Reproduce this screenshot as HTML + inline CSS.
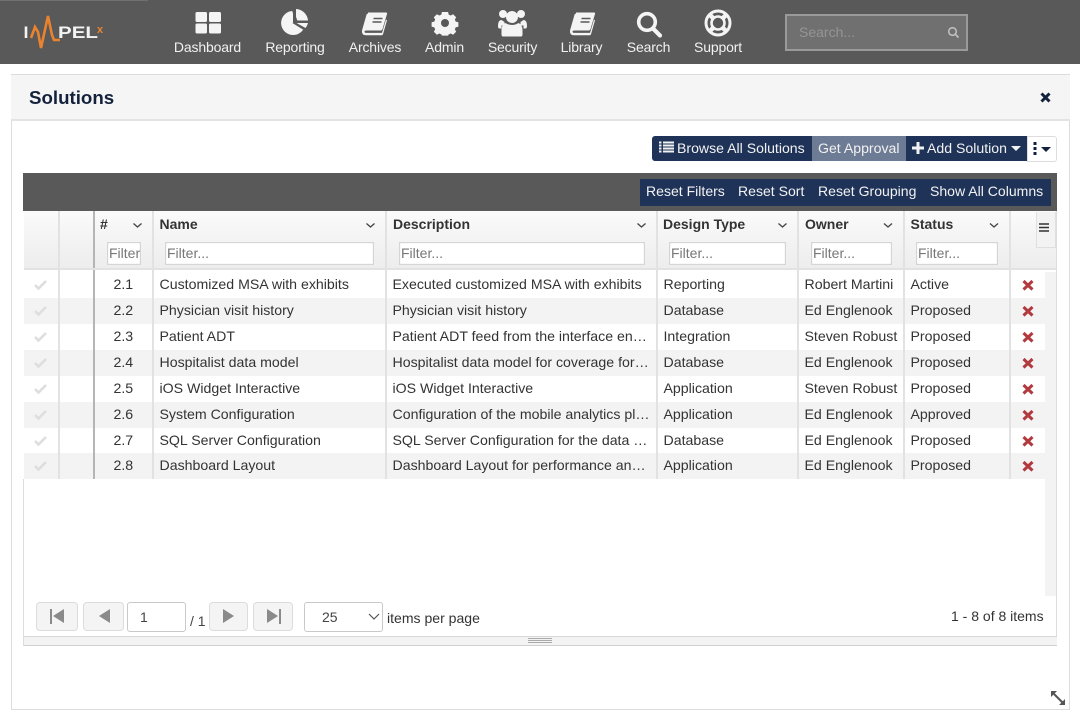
<!DOCTYPE html>
<html lang="en"><head><meta charset="utf-8"><title>Solutions</title>
<style>
*{box-sizing:border-box}
html,body{margin:0;padding:0;width:1080px;height:720px;overflow:hidden;background:#fff;font-family:"Liberation Sans",Arial,sans-serif;font-size:14px;color:#333}
.a{position:absolute;white-space:nowrap}
.nav{position:absolute;left:0;top:0;width:1080px;height:64px;background:#595959}
.nl{position:absolute;top:39px;height:16px;line-height:16px;color:#f1f1f1;font-size:14px;letter-spacing:-.15px;transform:translateX(-50%);white-space:nowrap}
.search{position:absolute;left:785px;top:14px;width:183px;height:37px;background:#707070;border:2px solid #9a9a9a;color:#959595;line-height:33px;padding-left:12px;font-size:14px}
.panel{position:absolute;left:11px;top:74px;width:1059px;height:636px;border:1px solid #ddd;background:#fff}
.phead{position:absolute;left:11px;top:75px;width:1059px;height:46px;background:#f5f5f5;border-bottom:2px solid #e3e3e3}
.title{position:absolute;left:29px;top:86px;font-size:18.700px;line-height:23px;font-weight:bold;color:#14213d}
.btn{position:absolute;top:136px;height:25px;line-height:24px;background:#1f3358;color:#f2f2f2;font-size:14.100px;white-space:nowrap}
.toolbar{position:absolute;left:23px;top:173px;width:1034px;height:38px;background:#595959}
.rb{position:absolute;left:640px;top:179px;width:411px;height:27px;background:#1f3358}
.rb span{position:absolute;top:0;line-height:25px;color:#f2f2f2;font-size:14.050px;white-space:nowrap}
.thead{position:absolute;left:24px;top:211px;width:1032px;height:59px;background:linear-gradient(#fbfbfb,#f6f6f6 30%,#ededed);border-bottom:2px solid #e2e2e2}
.sep{position:absolute;width:2px;background:#e2e2e2}
.dark{background:#b5b5b5}
.th{position:absolute;top:216px;font-weight:bold;color:#333;line-height:16px;white-space:nowrap}
.f{position:absolute;top:242px;height:23px;background:#fff;border:1px solid #d5d5d5;color:#777;line-height:20px;padding-left:1px;overflow:hidden;white-space:nowrap;box-shadow:inset 0 0 1px #ccc}
.row{position:absolute;left:24px;width:1021px;height:26px}
.g{background:#f3f3f3}
.c{position:absolute;top:-1px;line-height:26px;white-space:nowrap;color:#333;font-size:14.150px;margin-left:.5px}
.ck{position:absolute;left:9px;top:6px}
.x{position:absolute;left:998px;top:7px}
.pg{position:absolute;top:602px;height:29px;background:#f4f4f4;border:1px solid #dcdcdc;border-radius:4px}
.box{position:absolute;top:602px;height:30px;background:#fff;border:1px solid #c9c9c9;border-radius:3px;line-height:28px;color:#444}
</style></head><body>
<div class="nav"></div>
<div class="a" style="left:0;top:0;width:148px;height:1px;background:#707070"></div>

<svg class="a" style="left:0;top:0" width="1080" height="64" viewBox="0 0 1080 64">
<text x="23.500" y="38" font-family="Liberation Sans" font-size="17" font-weight="bold" fill="#f3f3f3" textLength="5" lengthAdjust="spacingAndGlyphs">I</text>
<path d="M31 38l4-11 3 5 3 16 7-32 4 19 2 5 6 0" fill="none" stroke="#e9832f" stroke-width="2.600"/>
<text x="58" y="38" font-family="Liberation Sans" font-size="17" font-weight="bold" fill="#f3f3f3" textLength="40" lengthAdjust="spacingAndGlyphs">PEL</text>
<text x="97" y="33" font-family="Liberation Sans" font-size="11" font-weight="bold" fill="#e9832f">x</text>
<g fill="#f4f4f4">
<rect x="195.500" y="12" width="11.500" height="10" rx="1.500"/><rect x="209" y="12" width="12" height="10" rx="1.500"/><rect x="195.500" y="23.500" width="11.500" height="10" rx="1.500"/><rect x="209" y="23.500" width="12" height="10" rx="1.500"/>
<path d="M293 11A12 12 0 1 0 303.500 29L293 22.500Z"/><path d="M296 9A12.500 12.500 0 0 1 308 20.500L296 20.500Z"/><path d="M296.500 23L308 23A13 13 0 0 1 305.500 28Z"/>
<path id="bk" d="M368 12.500h18q1.500 0 1 1.500l-4.500 15q-.5 1.500-2 1.500h-14q-2 0-2 1.200t2 1.200h15.500l4-13.400 1 .8-4 14q-.3 1-1.500 1H366q-4.500 0-4-4.500q.2-1 .5-2l4-14q.3-1.300 1.500-1.300Z"/>
<path d="M441.500 12h7l.7 3 2.300 1 2.700-1.500 3.500 3.500-1.500 2.700 1 2.300 3 .7v5l-3 .7-1 2.300 1.500 2.700-3.500 3.500-2.700-1.500-2.300 1-.7 1.500h-7l-.7-1.500-2.300-1-2.700 1.500-3.500-3.500 1.500-2.700-1-2.300-3-.7v-5l3-.7 1-2.300-1.500-2.700 3.500-3.500 2.700 1.500 2.300-1z" transform="translate(445 23) scale(.88) translate(-445 -24.500)" fill-rule="evenodd"/>
<circle cx="503" cy="14" r="4"/><circle cx="521" cy="14" r="4"/><circle cx="512" cy="17" r="6"/>
<path d="M498 26q0-6 3.500-6l3 2v3.500h-3v3h-2q-1.500 0-1.500-2.500ZM527 26q0-6-3.500-6l-3 2v3.500h3v3h2q1.500 0 1.500-2.500Z"/>
<path d="M503 36.500q-1.500 0-1.500-2v-4q0-6 4-7.500 3 2 6.500 2t6.500-2q4 1.500 4 7.500v4q0 2-1.500 2Z"/>
<path d="M576 12.500h18q1.500 0 1 1.500l-4.500 15q-.5 1.500-2 1.500h-14q-2 0-2 1.200t2 1.200h15.500l4-13.400 1 .8-4 14q-.3 1-1.500 1H574q-4.500 0-4-4.500q.2-1 .5-2l4-14q.3-1.300 1.500-1.300Z"/>
</g>
<g stroke="#595959" stroke-width="1.600" fill="none">
<path d="M296.500 20.500 293 11M293 22.500l10.500 6.500"/>
<path d="M373.500 18.500h9M372.500 22h9"/><path d="M581.500 18.500h9M580.500 22h9"/>
</g>
<circle cx="445" cy="23" r="4" fill="#595959"/>
<circle cx="647" cy="22" r="8.300" fill="none" stroke="#f4f4f4" stroke-width="3.600"/>
<path d="M653 28.500l7 7" stroke="#f4f4f4" stroke-width="4.200" stroke-linecap="round"/>
<circle cx="718" cy="23" r="12" fill="none" stroke="#f4f4f4" stroke-width="3"/>
<circle cx="718" cy="23" r="6.500" fill="none" stroke="#f4f4f4" stroke-width="2.600"/>
<path d="M710 15l4 4M726 15l-4 4M710 31l4-4M726 31l-4-4" stroke="#f4f4f4" stroke-width="4.500"/>
</svg>
<div class="nl" style="left:207.500px">Dashboard</div>
<div class="nl" style="left:295px">Reporting</div>
<div class="nl" style="left:375px">Archives</div>
<div class="nl" style="left:444.500px">Admin</div>
<div class="nl" style="left:512.500px">Security</div>
<div class="nl" style="left:581.500px">Library</div>
<div class="nl" style="left:648.500px">Search</div>
<div class="nl" style="left:718px">Support</div>
<div class="search">Search...</div>
<svg class="a" style="left:947px;top:26px" width="13" height="13" viewBox="0 0 13 13"><circle cx="5.500" cy="5.500" r="3.800" fill="none" stroke="#bdbdbd" stroke-width="1.600"/><path d="M8.500 8.500l3 3" stroke="#bdbdbd" stroke-width="1.800"/></svg>

<div class="panel"></div>
<div class="phead"></div>
<div class="title" style="top:86px">Solutions</div>
<svg class="a" style="left:1040px;top:92px" width="11" height="11" viewBox="0 0 11 11"><path d="M1.500 1.500l8 8M9.500 1.500l-8 8" stroke="#14213d" stroke-width="3"/></svg>

<div class="btn" style="left:652px;width:160px;border-radius:3px 0 0 3px"></div>
<svg class="a" style="left:659px;top:141px" width="15" height="12" viewBox="0 0 15 12"><path d="M0 1.500h2.500M4 1.500h11M0 4.500h2.500M4 4.500h11M0 7.500h2.500M4 7.500h11M0 10.500h2.500M4 10.500h11" stroke="#f2f2f2" stroke-width="2"/></svg>
<div class="btn" style="left:677px;background:none">Browse All Solutions</div>
<div class="btn" style="left:812px;width:94px;background:#6d7b94;padding-left:6px">Get Approval</div>
<div class="btn" style="left:906px;width:121px;padding-left:21px">Add Solution</div>
<svg class="a" style="left:912px;top:142px" width="12" height="12" viewBox="0 0 12 12"><path d="M6 0v12M0 6h12" stroke="#f2f2f2" stroke-width="3"/></svg>
<svg class="a" style="left:1011px;top:146px" width="10" height="6" viewBox="0 0 10 6"><path d="M0 0h10L5 5z" fill="#f2f2f2"/></svg>
<div class="a" style="left:1027px;top:136px;width:30px;height:26px;background:#fff;border:1px solid #ddd;border-radius:0 3px 3px 0"></div>
<svg class="a" style="left:1033px;top:142px" width="20" height="13" viewBox="0 0 20 13"><path d="M2 0v3M2 5v3M2 10v3" stroke="#14213d" stroke-width="3"/><path d="M8 5h10l-5 5z" fill="#14213d"/></svg>

<div class="toolbar"></div>
<div class="rb"><span style="left:6px">Reset Filters</span><span style="left:98px">Reset Sort</span><span style="left:178px">Reset Grouping</span><span style="left:290px">Show All Columns</span></div>

<div class="thead"></div>
<div class="a" style="left:1036px;top:212px;width:20px;height:36px;background:#f3f3f3;border:1px solid #dfdfdf;border-top:0"></div>
<svg class="a" style="left:1039px;top:223px" width="11" height="9" viewBox="0 0 11 9"><path d="M0 1h10M0 4.500h10M0 8h10" stroke="#333" stroke-width="1.500"/></svg>

<div class="a" style="left:1045px;top:272px;width:11px;height:324px;background:#f3f3f3"></div>

<div class="row" style="top:272px"><svg class="ck" width="15" height="13" viewBox="0 0 15 13"><path d="M2 7l3.500 3.500L13 3" fill="none" stroke="#dedede" stroke-width="2.600"/></svg><span class="c" style="left:89px">2.1</span><span class="c" style="left:135px">Customized MSA with exhibits</span><span class="c" style="left:368px">Executed customized MSA with exhibits</span><span class="c" style="left:639px">Reporting</span><span class="c" style="left:780px">Robert Martini</span><span class="c" style="left:886px">Active</span><svg class="x" width="12" height="12" viewBox="0 0 12 12"><path d="M1.500 2l9 8.500M10.500 2l-9 8.500" stroke="#b23a3e" stroke-width="3"/></svg></div>
<div class="row g" style="top:298px"><svg class="ck" width="15" height="13" viewBox="0 0 15 13"><path d="M2 7l3.500 3.500L13 3" fill="none" stroke="#dedede" stroke-width="2.600"/></svg><span class="c" style="left:89px">2.2</span><span class="c" style="left:135px">Physician visit history</span><span class="c" style="left:368px">Physician visit history</span><span class="c" style="left:639px">Database</span><span class="c" style="left:780px">Ed Englenook</span><span class="c" style="left:886px">Proposed</span><svg class="x" width="12" height="12" viewBox="0 0 12 12"><path d="M1.500 2l9 8.500M10.500 2l-9 8.500" stroke="#b23a3e" stroke-width="3"/></svg></div>
<div class="row" style="top:324px"><svg class="ck" width="15" height="13" viewBox="0 0 15 13"><path d="M2 7l3.500 3.500L13 3" fill="none" stroke="#dedede" stroke-width="2.600"/></svg><span class="c" style="left:89px">2.3</span><span class="c" style="left:135px">Patient ADT</span><span class="c" style="left:368px">Patient ADT feed from the interface en…</span><span class="c" style="left:639px">Integration</span><span class="c" style="left:780px">Steven Robust</span><span class="c" style="left:886px">Proposed</span><svg class="x" width="12" height="12" viewBox="0 0 12 12"><path d="M1.500 2l9 8.500M10.500 2l-9 8.500" stroke="#b23a3e" stroke-width="3"/></svg></div>
<div class="row g" style="top:350px"><svg class="ck" width="15" height="13" viewBox="0 0 15 13"><path d="M2 7l3.500 3.500L13 3" fill="none" stroke="#dedede" stroke-width="2.600"/></svg><span class="c" style="left:89px">2.4</span><span class="c" style="left:135px">Hospitalist data model</span><span class="c" style="left:368px">Hospitalist data model for coverage for…</span><span class="c" style="left:639px">Database</span><span class="c" style="left:780px">Ed Englenook</span><span class="c" style="left:886px">Proposed</span><svg class="x" width="12" height="12" viewBox="0 0 12 12"><path d="M1.500 2l9 8.500M10.500 2l-9 8.500" stroke="#b23a3e" stroke-width="3"/></svg></div>
<div class="row" style="top:376px"><svg class="ck" width="15" height="13" viewBox="0 0 15 13"><path d="M2 7l3.500 3.500L13 3" fill="none" stroke="#dedede" stroke-width="2.600"/></svg><span class="c" style="left:89px">2.5</span><span class="c" style="left:135px">iOS Widget Interactive</span><span class="c" style="left:368px">iOS Widget Interactive</span><span class="c" style="left:639px">Application</span><span class="c" style="left:780px">Steven Robust</span><span class="c" style="left:886px">Proposed</span><svg class="x" width="12" height="12" viewBox="0 0 12 12"><path d="M1.500 2l9 8.500M10.500 2l-9 8.500" stroke="#b23a3e" stroke-width="3"/></svg></div>
<div class="row g" style="top:402px"><svg class="ck" width="15" height="13" viewBox="0 0 15 13"><path d="M2 7l3.500 3.500L13 3" fill="none" stroke="#dedede" stroke-width="2.600"/></svg><span class="c" style="left:89px">2.6</span><span class="c" style="left:135px">System Configuration</span><span class="c" style="left:368px">Configuration of the mobile analytics pl…</span><span class="c" style="left:639px">Application</span><span class="c" style="left:780px">Ed Englenook</span><span class="c" style="left:886px">Approved</span><svg class="x" width="12" height="12" viewBox="0 0 12 12"><path d="M1.500 2l9 8.500M10.500 2l-9 8.500" stroke="#b23a3e" stroke-width="3"/></svg></div>
<div class="row" style="top:428px"><svg class="ck" width="15" height="13" viewBox="0 0 15 13"><path d="M2 7l3.500 3.500L13 3" fill="none" stroke="#dedede" stroke-width="2.600"/></svg><span class="c" style="left:89px">2.7</span><span class="c" style="left:135px">SQL Server Configuration</span><span class="c" style="left:368px">SQL Server Configuration for the data …</span><span class="c" style="left:639px">Database</span><span class="c" style="left:780px">Ed Englenook</span><span class="c" style="left:886px">Proposed</span><svg class="x" width="12" height="12" viewBox="0 0 12 12"><path d="M1.500 2l9 8.500M10.500 2l-9 8.500" stroke="#b23a3e" stroke-width="3"/></svg></div>
<div class="row g" style="top:453px"><svg class="ck" width="15" height="13" viewBox="0 0 15 13"><path d="M2 7l3.500 3.500L13 3" fill="none" stroke="#dedede" stroke-width="2.600"/></svg><span class="c" style="left:89px">2.8</span><span class="c" style="left:135px">Dashboard Layout</span><span class="c" style="left:368px">Dashboard Layout for performance an…</span><span class="c" style="left:639px">Application</span><span class="c" style="left:780px">Ed Englenook</span><span class="c" style="left:886px">Proposed</span><svg class="x" width="12" height="12" viewBox="0 0 12 12"><path d="M1.500 2l9 8.500M10.500 2l-9 8.500" stroke="#b23a3e" stroke-width="3"/></svg></div>

<div class="sep" style="left:58px;top:211px;height:268px"></div>
<div class="sep dark" style="left:93px;top:211px;height:268px"></div>
<div class="sep" style="left:152px;top:211px;height:268px"></div>
<div class="sep" style="left:385px;top:211px;height:268px"></div>
<div class="sep" style="left:656px;top:211px;height:268px"></div>
<div class="sep" style="left:797px;top:211px;height:268px"></div>
<div class="sep" style="left:903px;top:211px;height:268px"></div>
<div class="sep" style="left:1009px;top:211px;height:268px"></div>
<div class="a" style="left:24px;top:268px;width:1032px;height:2px;background:#e2e2e2"></div>

<div class="th" style="left:100px">#</div>
<div class="th" style="left:159.500px">Name</div>
<div class="th" style="left:393px">Description</div>
<div class="th" style="left:663px">Design Type</div>
<div class="th" style="left:805px">Owner</div>
<div class="th" style="left:910.500px">Status</div>
<svg class="a" style="left:0;top:0;pointer-events:none" width="1080" height="240" viewBox="0 0 1080 240"><path d="M133.500 223.500l4 3.500 4-3.500M366.500 223.500l4 3.500 4-3.500M637.500 223.500l4 3.500 4-3.500M778.500 223.500l4 3.500 4-3.500M884 223.500l4 3.500 4-3.500M990 223.500l4 3.500 4-3.500" fill="none" stroke="#444" stroke-width="1.300"/></svg>
<div class="f" style="left:107px;width:34px">Filter...</div>
<div class="f" style="left:165px;width:209px;padding-left:1px">Filter...</div>
<div class="f" style="left:399px;width:246px">Filter...</div>
<div class="f" style="left:669px;width:117px">Filter...</div>
<div class="f" style="left:811px;width:81px">Filter...</div>
<div class="f" style="left:916px;width:82px">Filter...</div>

<div class="a" style="left:23px;top:479px;width:1px;height:167px;background:#dcdcdc"></div>
<div class="a" style="left:1056px;top:211px;width:1px;height:435px;background:#dcdcdc"></div>
<div class="a" style="left:24px;top:636px;width:1033px;height:10px;background:#f3f3f3;border-top:1px solid #d8d8d8;border-bottom:1px solid #d0d0d0"></div>
<div class="a" style="left:528px;top:638px;width:24px;height:5px;border-top:1px solid #aaa;border-bottom:1px solid #aaa"></div>
<div class="a" style="left:528px;top:640px;width:24px;height:1px;background:#aaa"></div>

<div class="pg" style="left:36px;width:42px"></div>
<div class="pg" style="left:83px;width:41px"></div>
<div class="box" style="left:127px;width:59px;padding-left:12px">1</div>
<div class="a" style="left:190px;top:613px;line-height:16px;color:#444">/ 1</div>
<div class="pg" style="left:209px;width:39px"></div>
<div class="pg" style="left:253px;width:40px"></div>
<svg class="a" style="left:0;top:600px" width="300" height="36" viewBox="0 0 300 36"><g fill="#8a8a8a"><rect x="50" y="9" width="2" height="15"/><path d="M64 9v14l-11-7zM110 9v14l-11-7zM223 9v14l11-7zM267 9v14l11-7z"/><rect x="279" y="9" width="2" height="15"/></g></svg>
<div class="box" style="left:304px;width:79px;padding-left:17px;font-size:14px">25</div>
<svg class="a" style="left:368px;top:613px" width="12" height="7" viewBox="0 0 12 7"><path d="M1 1l5 5 5-5" fill="none" stroke="#555" stroke-width="1.200"/></svg>
<div class="a" style="left:387px;top:610px;line-height:16px;color:#333;font-size:14.050px">items per page</div>
<div class="a" style="left:951px;top:608px;line-height:16px;color:#333">1 - 8 of 8 items</div>

<svg class="a" style="left:1050px;top:690px" width="16" height="16" viewBox="0 0 16 16"><path d="M3 3l10 10" stroke="#555" stroke-width="2"/><path d="M1 1h6L1 7zM15 15H9l6-6z" fill="#555"/></svg>
</body></html>
